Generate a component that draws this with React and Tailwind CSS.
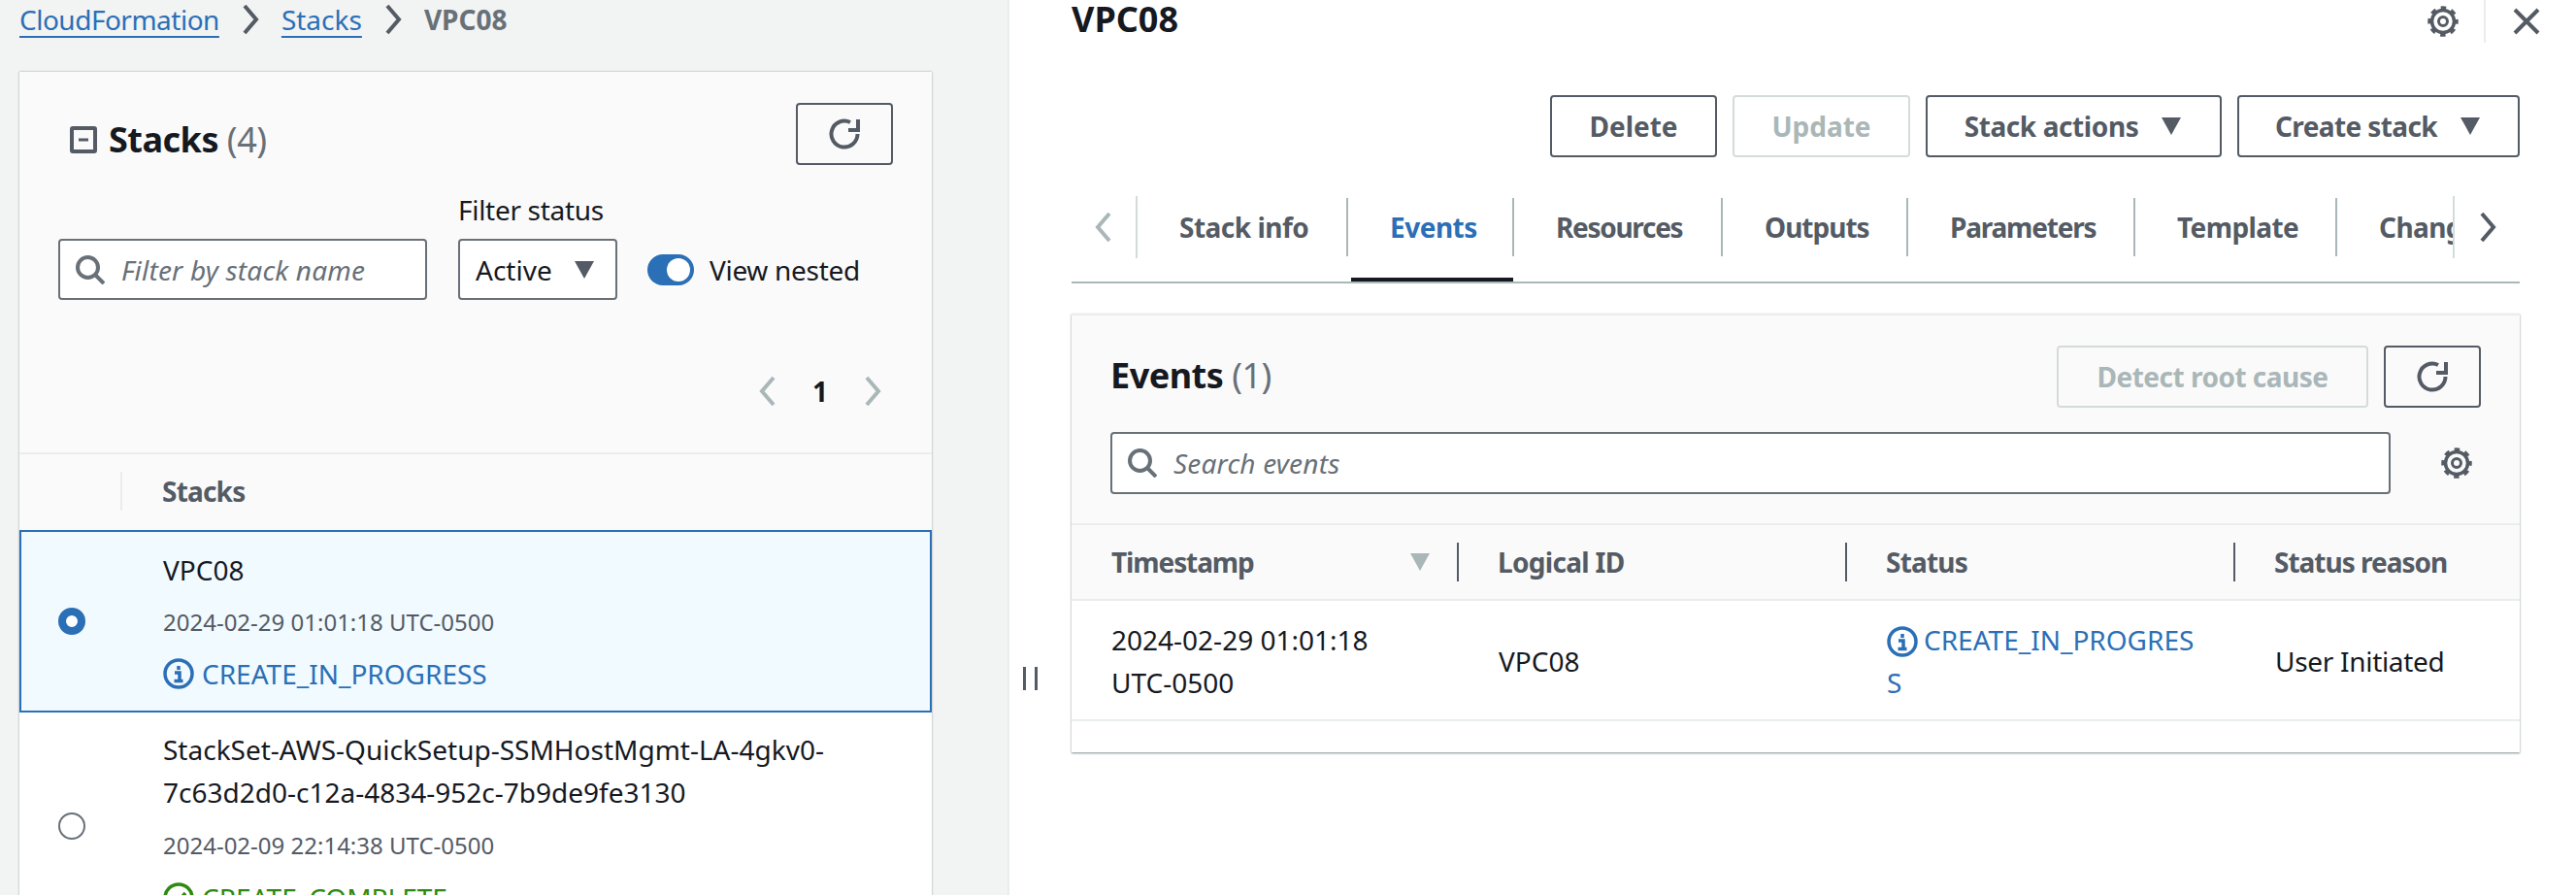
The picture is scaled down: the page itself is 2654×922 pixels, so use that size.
import React from 'react';

const font = { fontFamily: '"Noto Sans", "Open Sans", sans-serif' };

const Chevron = ({ dir = 'right', className = '' }) => (
    <svg viewBox="0 0 20 32" className={`w-[20px] h-[32px] ${className}`} fill="none" stroke="currentColor" strokeWidth="4">
        <path d={dir === 'right' ? 'M4 2l12 14L4 30' : 'M16 2L4 16l12 14'} />
    </svg>
);

const Caret = ({ className = '' }) => (
    <svg viewBox="0 0 24 20" className={`w-[24px] h-[20px] ${className}`} fill="currentColor">
        <path d="M2 1h20L12 19z" />
    </svg>
);

const Refresh = () => (
    <svg viewBox="0 0 32 32" className="w-[32px] h-[32px] text-[#545b64]" fill="none" stroke="currentColor" strokeWidth="4">
        <path d="M29.500 16A13.500 13.500 0 1 1 22 4" />
        <path d="M30 1v11H20" />
    </svg>
);

const Search = () => (
    <svg viewBox="0 0 30 30" className="w-[30px] h-[30px] text-[#687078] shrink-0" fill="none" stroke="currentColor" strokeWidth="4">
        <circle cx="12.500" cy="12.500" r="10.500" />
        <path d="M20 20l9 9" />
    </svg>
);

const Gear = () => (
    <svg viewBox="0 0 32 32" className="w-[32px] h-[32px] text-[#545b64]" fill="none" stroke="currentColor">
        <circle cx="16" cy="16" r="11.500" strokeWidth="3.500" />
        <circle cx="16" cy="16" r="14" strokeWidth="3.500" strokeDasharray="5.500 5.500" strokeDashoffset="2.750" />
        <circle cx="16" cy="16" r="4.500" strokeWidth="3" />
    </svg>
);

const InfoIcon = () => (
    <svg viewBox="0 0 32 32" className="w-[32px] h-[32px] shrink-0 text-[#2b6fb6]" fill="none" stroke="currentColor" strokeWidth="3.500">
        <circle cx="16" cy="16" r="14" />
        <path d="M16 8v4M12 15h5v9M11.500 23.500h9" />
    </svg>
);

const Button = ({ children, disabled, className = '' }) => (
    <div className={`h-[64px] flex items-center justify-center gap-[22px] rounded-[4px] border-2 font-bold text-[28px] ${disabled ? 'border-[#d5dbdb] text-[#aab7b8]' : 'border-[#545b64] text-[#545b64]'} ${className}`}>
        {children}
    </div>
);

const Radio = ({ checked }) => (
    checked ? (
        <div className="w-[28px] h-[28px] rounded-full border-[8px] border-[#2b6fb6] bg-white" />
    ) : (
        <div className="w-[28px] h-[28px] rounded-full border-2 border-[#687078] bg-white" />
    )
);

const tabs = [
    ['Stack info', 'w-[217px] tracking-[-0.5px]'],
    ['Events', 'w-[171px] tracking-[-0.5px]'],
    ['Resources', 'w-[215px] tracking-[-1.3px]'],
    ['Outputs', 'w-[191px] tracking-[-1px]'],
    ['Parameters', 'w-[234px] tracking-[-1.2px]'],
    ['Template', 'w-[208px] tracking-[-0.6px]'],
    ['Change sets', 'w-[119px] tracking-[-0.6px]'],
];

const App = () => {
    return (
        <div style={font} className="flex w-[2654px] h-[922px] overflow-hidden bg-white text-[28px] leading-[44px] text-[#16191f]">
            {/* Left panel */}
            <div className="w-[1040px] shrink-0 h-full bg-[#f2f3f3] border-r-2 border-[#eaeded] pl-[20px] pr-[78px] overflow-hidden">
                <div className="h-[74px] flex items-start text-[#545b64]">
                    <div className="flex items-center gap-[22px] h-[40px]">
                        <span className="text-[#2b6fb6] underline underline-offset-[6px] decoration-2 tracking-[-0.5px]">CloudFormation</span>
                        <Chevron className="w-[19px] h-[30px]" />
                        <span className="text-[#2b6fb6] underline underline-offset-[6px] decoration-2">Stacks</span>
                        <Chevron className="w-[19px] h-[30px]" />
                        <span className="font-bold text-[#687078]">VPC08</span>
                    </div>
                </div>

                <div className="w-[940px] bg-white shadow-[0_0_2px_rgba(0,28,36,0.4)]">
                    <div className="h-[394px] bg-[#fafafa] border-b-2 border-[#eaeded] pl-[40px] pr-[40px] pt-[32px]">
                        <div className="flex justify-between items-start h-[64px]">
                            <div className="flex items-center gap-[12px] mt-[16px] pl-[12px]">
                                <svg viewBox="0 0 28 28" className="w-[28px] h-[28px] text-[#545b64]" fill="none" stroke="currentColor" strokeWidth="4">
                                    <rect x="2" y="2" width="24" height="24" rx="1" />
                                    <path d="M9 14h10" strokeWidth="3" />
                                </svg>
                                <span className="text-[36px] leading-[44px] font-bold tracking-[-0.5px]">Stacks <span className="font-normal text-[#687078]">(4)</span></span>
                            </div>
                            <Button className="w-[100px]"><Refresh /></Button>
                        </div>

                        <div className="flex items-end mt-[24px]">
                            <div className="w-[380px] h-[63px] rounded-[4px] border-2 border-[#687078] bg-white flex items-center gap-[17px] pl-[16px]">
                                <Search />
                                <span className="italic text-[#687078] tracking-[0.2px]">Filter by stack name</span>
                            </div>
                            <div className="ml-[32px] w-[164px]">
                                <div className="leading-[44px] mb-[8px] tracking-[-0.3px]">Filter status</div>
                                <div className="h-[63px] rounded-[4px] border-2 border-[#687078] bg-white flex items-center justify-between pl-[16px] pr-[20px]">
                                    <span>Active</span>
                                    <Caret className="text-[#545b64]" />
                                </div>
                            </div>
                            <div className="ml-[31px] h-[63px] flex items-center gap-[16px]">
                                <div className="w-[48px] h-[32px] rounded-full bg-[#2b6fb6] flex justify-end items-center pr-[4px]">
                                    <div className="w-[24px] h-[24px] rounded-full bg-white" />
                                </div>
                                <span className="tracking-[-0.3px]">View nested</span>
                            </div>
                        </div>

                        <div className="flex justify-end items-center gap-[36px] mt-[72px] pr-[11px]">
                            <Chevron dir="left" className="text-[#aab7b8]" />
                            <span className="font-bold">1</span>
                            <Chevron className="text-[#aab7b8]" />
                        </div>
                    </div>

                    <div className="h-[78px] bg-[#fafafa] flex items-center pb-[2px]">
                        <div className="w-[106px] h-[40px] border-r-2 border-[#eaeded]" />
                        <span className="ml-[41px] font-bold text-[#545b64] tracking-[-0.8px]">Stacks</span>
                    </div>

                    <div className="h-[188px] flex items-center bg-[#f1faff] border-2 border-[#2b6fb6]">
                        <div className="w-[146px] pl-[38px] shrink-0"><Radio checked /></div>
                        <div className="-mt-[1px]">
                            <div className="leading-[54px]">VPC08</div>
                            <div className="text-[#545b64] text-[24px] leading-[54px]">2024-02-29 01:01:18 UTC-0500</div>
                            <div className="flex items-center gap-[8px] text-[#2b6fb6] leading-[52px]"><InfoIcon />CREATE_IN_PROGRESS</div>
                        </div>
                    </div>

                    <div className="flex items-center pt-[16px] pb-[20px]">
                        <div className="w-[148px] pl-[40px] shrink-0"><Radio /></div>
                        <div className="w-[760px]">
                            <div>StackSet-AWS-QuickSetup-SSMHostMgmt-LA-4gkv0-</div>
                            <div>7c63d2d0-c12a-4834-952c-7b9de9fe3130</div>
                            <div className="text-[#545b64] text-[24px] leading-[54px] mt-[6px]">2024-02-09 22:14:38 UTC-0500</div>
                            <div className="flex items-center gap-[8px] text-[#2f8a12] leading-[54px]">
                                <svg viewBox="0 0 32 32" className="w-[32px] h-[32px] shrink-0" fill="none" stroke="currentColor" strokeWidth="3.500">
                                    <circle cx="16" cy="16" r="14" />
                                    <path d="M9 16l5 5 9-10" />
                                </svg>
                                CREATE_COMPLETE
                            </div>
                        </div>
                    </div>
                </div>
            </div>

            {/* Right panel */}
            <div className="relative flex-1 min-w-0 pl-[64px] pr-[58px]">
                <div className="absolute left-[14px] top-[687px] w-[15px] h-[24px] border-x-[3px] border-[#545b64]" />

                <div className="h-[44px] flex items-center justify-between -mr-[58px]">
                    <span className="text-[36px] leading-[40px] font-bold -mt-[4px]">VPC08</span>
                    <div className="flex items-center h-full">
                        <Gear />
                        <div className="w-[2px] h-full bg-[#eaeded] ml-[26px]" />
                        <div className="w-[93px] flex pl-[28px]">
                            <svg viewBox="0 0 28 28" className="w-[28px] h-[28px] text-[#545b64]" fill="none" stroke="currentColor" strokeWidth="4">
                                <path d="M2 2l24 24M26 2L2 26" />
                            </svg>
                        </div>
                    </div>
                </div>

                <div className="mt-[54px] flex justify-end gap-[16px]">
                    <Button className="w-[172px]">Delete</Button>
                    <Button disabled className="w-[183px]">Update</Button>
                    <Button className="w-[305px] tracking-[-0.4px]">Stack actions<Caret className="w-[20px] h-[18px]" /></Button>
                    <Button className="w-[291px] tracking-[-0.6px]">Create stack<Caret className="w-[20px] h-[18px]" /></Button>
                </div>

                <div className="mt-[40px] h-[90px] border-b-2 border-[#aab7b8] flex items-start text-[#545b64] font-bold">
                    <div className="w-[68px] h-[64px] flex items-center justify-center border-r-2 border-[#d5dbdb]">
                        <Chevron dir="left" className="text-[#aab7b8]" />
                    </div>
                    {tabs.map(([label, cls], i) => (
                        <div key={label} className={`${cls} relative h-[88px] shrink-0 overflow-hidden`}>
                            <div className={`h-[60px] mt-[2px] flex items-center pl-[43px] whitespace-nowrap ${i < tabs.length - 1 ? 'border-r-2 border-[#aab7b8]' : ''} ${i === 1 ? 'text-[#2b6fb6]' : ''}`}>
                                {label}
                            </div>
                            {i === 1 && <div className="absolute left-[3px] right-[1px] bottom-0 h-[4px] bg-[#16191f]" />}
                        </div>
                    ))}
                    <div className="flex-1 h-[64px] flex items-center justify-center border-l-2 border-[#d5dbdb]">
                        <Chevron className="text-[#545b64]" />
                    </div>
                </div>

                <div className="mt-[31px] bg-white shadow-[0_1px_2px_rgba(0,28,36,0.5)] border-t-2 border-[#eaeded]">
                    <div className="h-[216px] bg-[#fafafa] border-b-2 border-[#eaeded] px-[40px] pt-[31px]">
                        <div className="flex justify-between items-start">
                            <span className="text-[36px] leading-[62px] font-bold tracking-[-0.5px]">Events <span className="font-normal text-[#687078]">(1)</span></span>
                            <div className="flex gap-[16px]">
                                <Button disabled className="w-[321px] tracking-[-0.5px]">Detect root cause</Button>
                                <Button className="w-[100px]"><Refresh /></Button>
                            </div>
                        </div>
                        <div className="flex items-center justify-between mt-[25px]">
                            <div className="w-[1319px] h-[64px] rounded-[4px] border-2 border-[#687078] bg-white flex items-center gap-[17px] pl-[16px]">
                                <Search />
                                <span className="italic text-[#687078] tracking-[0.2px]">Search events</span>
                            </div>
                            <div className="mr-[9px]"><Gear /></div>
                        </div>
                    </div>

                    <div className="h-[78px] bg-[#fafafa] border-b-2 border-[#eaeded] flex items-center font-bold text-[#545b64]">
                        <div className="w-[399px] h-[40px] flex items-center justify-between pl-[41px] pr-[26px] border-r-2 border-[#545b64]">
                            <span className="tracking-[-1.1px]">Timestamp</span><Caret className="w-[20px] h-[18px] text-[#aab7b8]" />
                        </div>
                        <div className="w-[400px] h-[40px] flex items-center pl-[40px] border-r-2 border-[#545b64] tracking-[-0.7px]">Logical ID</div>
                        <div className="w-[400px] h-[40px] flex items-center pl-[40px] border-r-2 border-[#545b64] tracking-[-0.8px]">Status</div>
                        <div className="pl-[40px] tracking-[-1px] whitespace-nowrap">Status reason</div>
                    </div>

                    <div className="h-[124px] border-b-2 border-[#eaeded] flex items-center pt-[2px]">
                        <div className="w-[399px] pl-[41px]">2024-02-29 01:01:18<br />UTC-0500</div>
                        <div className="w-[400px] pl-[41px]">VPC08</div>
                        <div className="w-[400px] pl-[41px] pr-[40px] text-[#2b6fb6] break-all">
                            <span className="inline-block align-[-7px] mr-[6px]"><InfoIcon /></span>CREATE_IN_PROGRESS
                        </div>
                        <div className="pl-[41px] whitespace-nowrap tracking-[-0.3px]">User Initiated</div>
                    </div>

                    <div className="h-[32px]" />
                </div>
            </div>
        </div>
    );
};

export default App;
